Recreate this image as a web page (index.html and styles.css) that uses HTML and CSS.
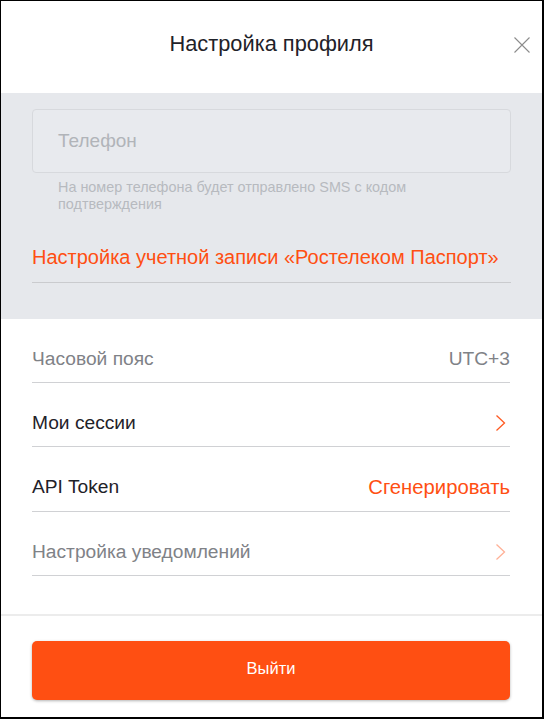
FILE: index.html
```html
<!DOCTYPE html>
<html lang="ru">
<head>
<meta charset="utf-8">
<title>Настройка профиля</title>
<link rel="stylesheet" href="styles.css">
</head>
<body>
<div class="modal">
  <header class="head">
    <h1 class="title">Настройка профиля</h1>
    <button class="close" aria-label="Закрыть">
      <svg width="16" height="16" viewBox="0 0 16 16"><path d="M0.5 0.5L15.5 15.5M15.5 0.5L0.5 15.5" stroke="#8c8c8c" stroke-width="1.1" fill="none"/></svg>
    </button>
  </header>
  <section class="gray">
    <div class="input">Телефон</div>
    <p class="hint">На номер телефона будет отправлено SMS с кодом подтверждения</p>
    <div class="link-row"><a class="link">Настройка учетной записи «Ростелеком Паспорт»</a></div>
  </section>
  <section class="list">
    <div class="row"><span class="muted">Часовой пояс</span><span class="muted">UTC+3</span></div>
    <div class="row"><span class="dark">Мои сессии</span>
      <svg class="chev" width="12" height="18" viewBox="0 0 12 18"><path d="M1.5 1.5L9.5 9L1.5 16.5" stroke="#ff5a22" stroke-width="1.3" fill="none"/></svg>
    </div>
    <div class="row"><span class="dark">API Token</span><span class="orange">Сгенерировать</span></div>
    <div class="row"><span class="muted">Настройка уведомлений</span>
      <svg class="chev" width="12" height="18" viewBox="0 0 12 18"><path d="M1.5 1.5L9.5 9L1.5 16.5" stroke="#ffb197" stroke-width="1.3" fill="none"/></svg>
    </div>
  </section>
  <footer class="foot">
    <button class="btn">Выйти</button>
  </footer>
</div>
</body>
</html>
```
FILE: styles.css
```css
* { box-sizing: border-box; }
html, body { margin: 0; padding: 0; background: #fff; }
body { font-family: "Liberation Sans", Arial, sans-serif; }
.modal {
  width: 544px;
  height: 719px;
  border: 1px solid #000;
  border-right-width: 2px;
  border-bottom-width: 2px;
  display: flex;
  flex-direction: column;
  background: #fff;
  position: relative;
}
.head {
  height: 92px;
  flex: none;
  display: flex;
  align-items: center;
  justify-content: center;
  position: relative;
}
.title {
  margin: 0 0 6px;
  font-size: 21.8px;
  font-weight: normal;
  color: #1f2229;
  line-height: 26px;
}
.close {
  position: absolute;
  right: 12px;
  top: 36px;
  width: 16px;
  height: 16px;
  padding: 0;
  border: 0;
  background: none;
  display: block;
}
.close svg { display: block; }
.gray {
  background: #e6e8ec;
  padding: 16px 31px 36px 31px;
  flex: none;
}
.input {
  height: 64px;
  border: 1px solid #d7d9dd;
  border-radius: 4px;
  background: #e8eaee;
  padding-left: 25px;
  display: flex;
  align-items: center;
  font-size: 19px;
  color: #b1b4b9;
}
.hint {
  margin: 6px 0 0;
  padding-left: 26px;
  font-size: 14.4px;
  line-height: 17px;
  color: #b7babf;
  max-width: 440px;
}
.link-row {
  margin-top: 32px;
  padding-bottom: 13px;
  border-bottom: 1px solid #cacbce;
}
.link {
  display: block;
  font-size: 20px;
  line-height: 24px;
  color: #ff4f12;
}
.list {
  padding: 0 32px 0 31px;
  flex: none;
}
.row {
  height: 64px;
  padding-top: 28px;
  border-bottom: 1px solid #d0d1d4;
  display: flex;
  justify-content: space-between;
  align-items: flex-start;
  font-size: 19.2px;
  line-height: 24px;
}
.row:nth-child(3) { height: 65px; }
.muted { color: #7f8287; }
.dark { color: #1f2229; }
.orange { color: #ff4f12; font-size: 20.3px; }
.chev { margin-top: 3px; margin-right: 3px; display: block; }
.foot {
  margin-top: 38px;
  border-top: 2px solid #ececec;
  padding: 25px 32px 0 31px;
}
.btn {
  width: 100%;
  height: 59px;
  border: 0;
  border-radius: 5px;
  background: #ff4f12;
  color: #fff;
  font-family: "Liberation Sans", Arial, sans-serif;
  font-size: 16.5px;
  box-shadow: 0 1px 3px rgba(0,0,0,0.3);
  padding: 0 0 4px;
}
```
